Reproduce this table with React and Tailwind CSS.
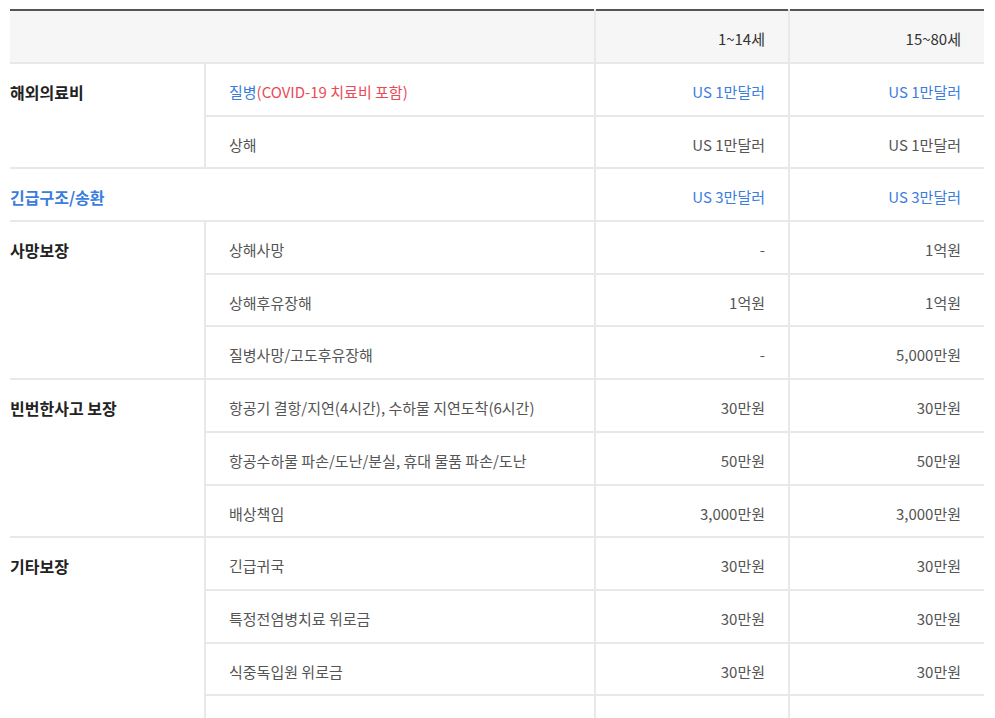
const rows = [
  {
    group: "해외의료비",
    items: [
      { name: "질병", extra: "(COVID-19 치료비 포함)", a: "US 1만달러", b: "US 1만달러", blue: true },
      { name: "상해", a: "US 1만달러", b: "US 1만달러" },
    ],
  },
  { full: "긴급구조/송환", a: "US 3만달러", b: "US 3만달러" },
  {
    group: "사망보장",
    items: [
      { name: "상해사망", a: "-", b: "1억원" },
      { name: "상해후유장해", a: "1억원", b: "1억원" },
      { name: "질병사망/고도후유장해", a: "-", b: "5,000만원" },
    ],
  },
  {
    group: "빈번한사고 보장",
    items: [
      { name: "항공기 결항/지연(4시간), 수하물 지연도착(6시간)", a: "30만원", b: "30만원" },
      { name: "항공수하물 파손/도난/분실, 휴대 물품 파손/도난", a: "50만원", b: "50만원" },
      { name: "배상책임", a: "3,000만원", b: "3,000만원" },
    ],
  },
  {
    group: "기타보장",
    items: [
      { name: "긴급귀국", a: "30만원", b: "30만원" },
      { name: "특정전염병치료 위로금", a: "30만원", b: "30만원" },
      { name: "식중독입원 위로금", a: "30만원", b: "30만원" },
      // next row is cut off by the viewport
      { name: "", a: "", b: "" },
    ],
  },
];

const cell = "align-top pt-[17px] leading-[22px] border-b-2 border-[#e8e8e8]";
const val = cell + " border-l-2 text-right pr-[23px]";

export default function App() {
  return (
    <div
      className="pl-[10px] pt-[9px] pr-[11px] bg-white min-h-screen text-[15px] text-[#555]"
      style={{ fontFamily: '"Noto Sans CJK KR", "Noto Sans", sans-serif' }}
    >
      <table className="w-[974px] table-fixed border-collapse border-t-2 border-t-[#555]">
        <colgroup>
          <col className="w-[195px]" />
          <col className="w-[390px]" />
          <col className="w-[194px]" />
          <col className="w-[195px]" />
        </colgroup>
        <thead>
          <tr className="h-[53px] bg-[#f6f6f6]">
            <th colSpan={2} className={cell}></th>
            <th className={val + " font-normal text-[#333]"}>1~14세</th>
            <th className={val + " font-normal text-[#333]"}>15~80세</th>
          </tr>
        </thead>
        <tbody>
          {rows.map((r, i) =>
            r.full ? (
              <tr key={i} className="h-[52.7px]">
                <td colSpan={2} className={cell + " text-[16px] font-bold text-[#3b7ddd]"}>{r.full}</td>
                <td className={val + " text-[#3b7ddd]"}>{r.a}</td>
                <td className={val + " text-[#3b7ddd]"}>{r.b}</td>
              </tr>
            ) : (
              r.items.map((it, j) => (
                <tr key={i + "-" + j} className="h-[52.7px]">
                  {j === 0 && (
                    <td rowSpan={r.items.length} className={cell + " text-[16px] font-bold text-[#222]"}>
                      {r.group}
                    </td>
                  )}
                  <td className={cell + " border-l-2 pl-[23px]"}>
                    {it.extra ? (
                      <>
                        <span className="text-[#3b7ddd]">{it.name}</span>
                        <span className="text-[#e94a56]">{it.extra}</span>
                      </>
                    ) : (
                      it.name
                    )}
                  </td>
                  <td className={val + (it.blue ? " text-[#3b7ddd]" : "")}>{it.a}</td>
                  <td className={val + (it.blue ? " text-[#3b7ddd]" : "")}>{it.b}</td>
                </tr>
              ))
            )
          )}
        </tbody>
      </table>
    </div>
  );
}
